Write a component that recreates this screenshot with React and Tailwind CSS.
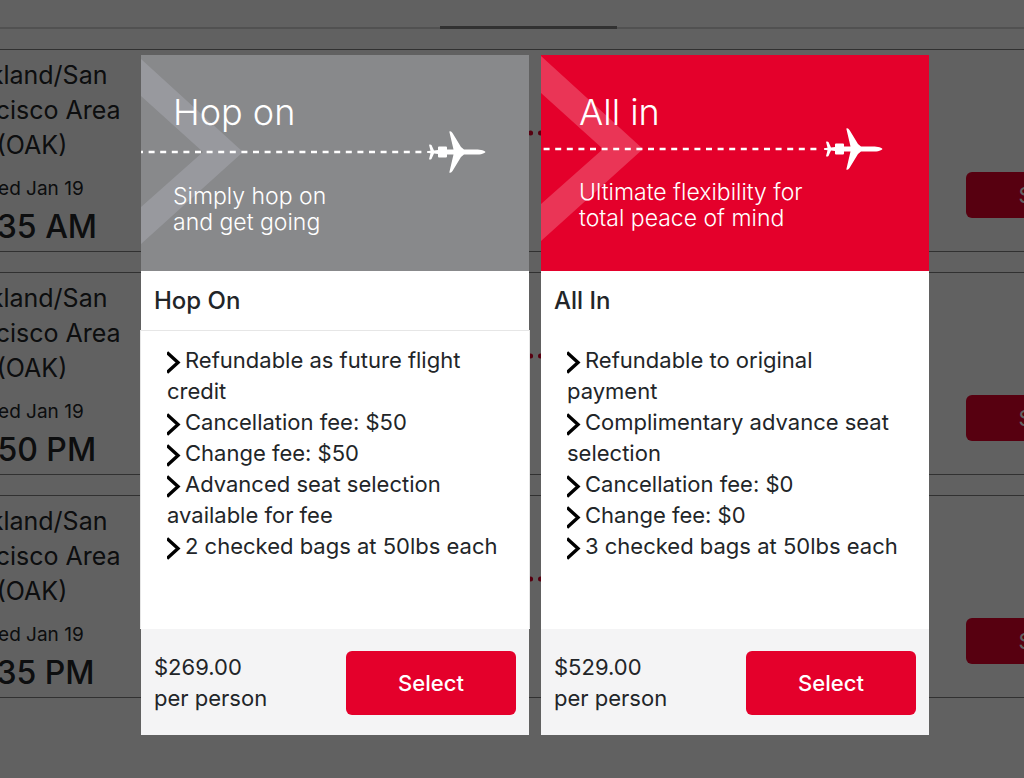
import React, { useState } from "react";

const flights = [
  { id: 1, date: "Wed Jan 19", time: "6:35 AM" },
  { id: 2, date: "Wed Jan 19", time: "5:50 PM" },
  { id: 3, date: "Wed Jan 19", time: "7:35 PM" },
];

const fares = [
  {
    id: "hop-on",
    banner: "Hop on",
    tagline: ["Simply hop on", "and get going"],
    name: "Hop On",
    price: "$269.00",
    perks: [
      "Refundable as future flight credit",
      "Cancellation fee: $50",
      "Change fee: $50",
      "Advanced seat selection available for fee",
      "2 checked bags at 50lbs each",
    ],
    headerClass: "bg-[#88898b] pl-8",
    taglineClass: "mt-[51px]",
    bodyClass: "-mx-px border border-[#e6e6e6] border-b-white",
    listClass: "px-[26px]",
    chevron: "#98999e",
    artX: 0,
    artY: 97,
    dashOffset: 4,
  },
  {
    id: "all-in",
    banner: "All in",
    tagline: ["Ultimate flexibility for", "total peace of mind"],
    name: "All In",
    price: "$529.00",
    perks: [
      "Refundable to original payment",
      "Complimentary advance seat selection",
      "Cancellation fee: $0",
      "Change fee: $0",
      "3 checked bags at 50lbs each",
    ],
    headerClass: "bg-[#e4002b] pl-[38px]",
    taglineClass: "mt-[47px]",
    bodyClass: "border border-white",
    listClass: "px-[25px]",
    chevron: "#ea3556",
    artX: -3,
    artY: 94,
    dashOffset: 6,
  },
];

const BannerArt = ({ chevron, artX, artY, dashOffset }) => (
  <svg
    viewBox="0 0 388 216"
    preserveAspectRatio="xMinYMid meet"
    className="absolute inset-0 h-full w-full"
    aria-hidden="true"
  >
    <path
      d="M0 -93 L102 0 L0 92 V55 L62 0 L0 -56 Z"
      fill={chevron}
      transform={`translate(0 ${artY})`}
    />
    <g transform={`translate(${artX} ${artY})`}>
      <path
        d="M0 0 H284"
        stroke="#fff"
        strokeWidth="2.6"
        strokeDasharray="6 5.6"
        strokeDashoffset={dashOffset}
      />
      <path
        d="M344.500 0 C343 -2.300 338 -2.600 333 -2.600 H323 L320 -5 L311.500 -19 Q310 -21.500 308.300 -20.500 L312.500 -2.600 H306 V-4.500 Q306 -5.500 305 -5.500 H298 Q297 -5.500 297 -4.500 V-2 L293 -1.600 L290.500 -7 Q289.500 -8 288 -7.300 L289.500 -1.200 L286 -0.800 V0.800 L289.500 1.200 L288 7.300 Q289.500 8 290.500 7 L293 1.600 L297 2 V4.500 Q297 5.500 298 5.500 H305 Q306 5.500 306 4.500 V2.600 H312.500 L308.300 20.500 Q310 21.500 311.500 19 L320 5 L323 2.600 H333 C338 2.600 343 2.300 344.500 0 Z"
        fill="#fff"
      />
    </g>
  </svg>
);

const Caret = () => (
  <svg
    viewBox="0 0 14 24"
    className="mr-1 inline-block h-6 w-3.5 align-middle"
    aria-hidden="true"
  >
    <path d="M0 2.500 L11 12.500 L0 22.500" fill="none" stroke="#000" strokeWidth="3.4" />
  </svg>
);

const FlightPath = () => (
  <svg className="mx-auto mt-20 h-1.5 w-1/3" aria-hidden="true">
    <line
      x1="0"
      y1="3"
      x2="100%"
      y2="3"
      stroke="#e4002b"
      strokeWidth="5"
      strokeLinecap="round"
      strokeDasharray="0.1 9.9"
      strokeDashoffset="6.5"
    />
  </svg>
);

const FlightRow = ({ flight }) => (
  <li className="flex items-start border-y border-[#808080] pb-px">
    <div className="w-48 shrink-0 pt-2 pb-1 text-center">
      <p className="text-[25px] leading-[35px]">
        Oakland/San
        <br />
        Francisco Area
        <br />
        (OAK)
      </p>
      <p className="mt-3 text-[19px] leading-7">{flight.date}</p>
      <p className="mt-1 text-[32px] leading-[39px] font-medium">{flight.time}</p>
    </div>
    <FlightPath />
    <button
      type="button"
      className="mt-[122px] h-[46px] w-[170px] shrink-0 rounded-md bg-[#e4002b] text-[22px] text-white"
    >
      Select
    </button>
  </li>
);

const FareCard = ({ fare, selected, onSelect }) => (
  <article className="flex flex-col bg-white">
    <header className={`relative h-54 pt-[37px] text-white ${fare.headerClass}`}>
      <BannerArt
        chevron={fare.chevron}
        artX={fare.artX}
        artY={fare.artY}
        dashOffset={fare.dashOffset}
      />
      <h2 className="relative text-[36px] leading-10 font-light">
        {fare.banner}
      </h2>
      <p className={`relative text-[23px] leading-[26px] font-light ${fare.taglineClass}`}>
        {fare.tagline[0]}
        <br />
        {fare.tagline[1]}
      </p>
    </header>
    <h3 className="px-[13px] py-3 text-[24px] leading-[35px] font-medium">
      {fare.name}
    </h3>
    <ul
      className={`min-h-[299px] grow bg-white pt-3.5 text-[22px] leading-[31px] ${fare.listClass} ${fare.bodyClass}`}
    >
      {fare.perks.map((perk) => (
        <li key={perk}>
          <Caret />
          {perk}
        </li>
      ))}
    </ul>
    <footer className="flex items-center justify-between bg-[#f4f4f5] px-[13px] pt-[22px] pb-5">
      <p className="text-[22px] leading-[31px]">
        {fare.price}
        <br />
        per person
      </p>
      <button
        type="button"
        aria-pressed={selected}
        onClick={() => onSelect(fare.id)}
        className="h-16 w-[170px] rounded-md bg-[#e4002b] text-[22px] font-medium text-white"
      >
        Select
      </button>
    </footer>
  </article>
);

const App = () => {
  const [selectedFare, setSelectedFare] = useState(null);

  return (
    <div className="relative min-h-screen overflow-hidden bg-white font-[Inter,sans-serif] text-[#222528]">
      <div className="h-[49px]">
        <div className="flex h-[29px] items-end justify-center border-b-2 border-[#d5d5d5]">
          <div className="-mb-0.5 ml-8 h-[3px] w-[177px] bg-[#808080]" />
        </div>
      </div>
      <ul className="-mr-28 -ml-16 flex flex-col gap-5">
        {flights.map((flight) => (
          <FlightRow key={flight.id} flight={flight} />
        ))}
      </ul>

      <div className="absolute inset-0 bg-black/62">
        <div
          role="dialog"
          aria-label="Choose your fare"
          className="grid grid-cols-2 gap-3 pt-[55px] pr-[95px] pl-[141px]"
        >
          {fares.map((fare) => (
            <FareCard
              key={fare.id}
              fare={fare}
              selected={selectedFare === fare.id}
              onSelect={setSelectedFare}
            />
          ))}
        </div>
      </div>
    </div>
  );
};

export default App;
